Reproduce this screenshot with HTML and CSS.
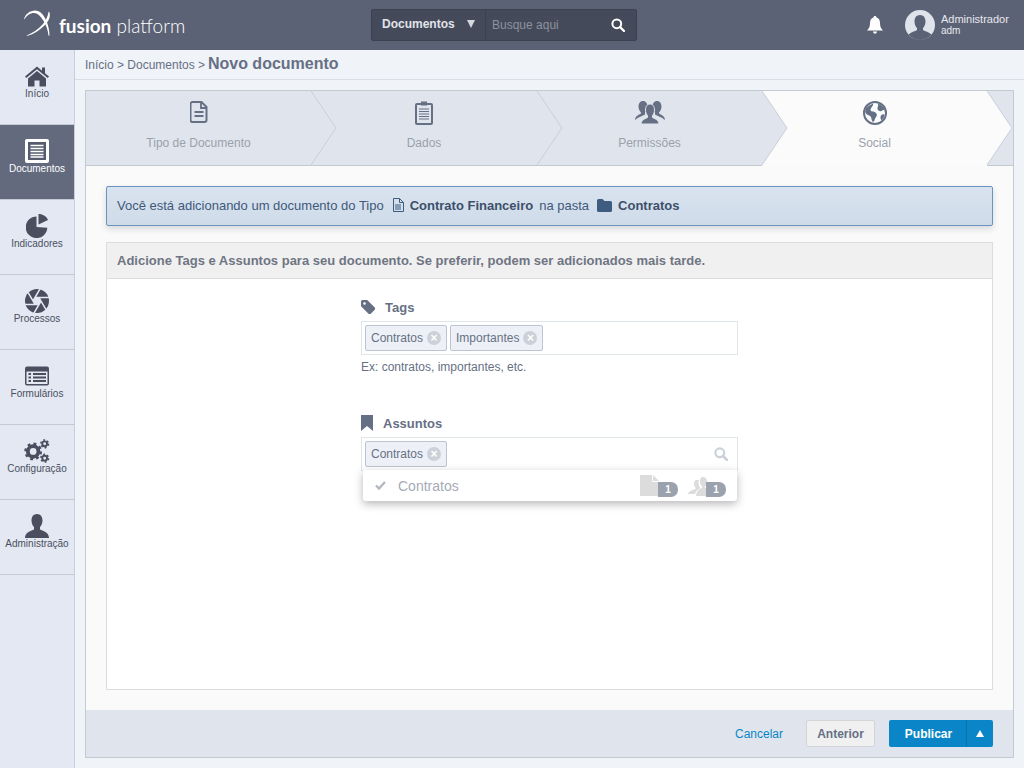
FILE: index.html
```html
<!DOCTYPE html>
<html lang="pt">
<head>
<meta charset="utf-8">
<title>Fusion Platform</title>
<link rel="stylesheet" href="styles.css">
</head>
<body>
<header class="topbar">
  <div class="brand">
    <svg class="logo" width="30" height="30" viewBox="0 0 30 30"><path d="M1 10C2.500 5 7 1.500 12 1.500c5 0 8.500 4 11 9.500 2 4.500 3.500 10 3.500 15.500-.5.2-.7.2-1 0C25 21 23 15.500 20 11 17.500 7.300 14.500 4 11 4 7 4 3.500 6.500 1.500 10.300z" fill="#fff"/><path d="M26 2.500c2 4 .5 9-4 13.500-5 5-11 9-18 11l-.3-.6C10 24 15.500 20 19.500 15.500 23 11.500 25 7 25.500 3z" fill="#fff"/></svg>
    <span class="brand-name"><b>fusion</b> platform</span>
  </div>
  <div class="search">
    <div class="search-type"><span>Documentos</span><i class="caret-down"></i></div>
    <div class="search-field"><span>Busque aqui</span>
      <svg width="14" height="14" viewBox="0 0 14 14"><circle cx="5.800" cy="5.800" r="4.400" fill="none" stroke="#fff" stroke-width="2"/><path d="M9 9l4 4" stroke="#fff" stroke-width="2.400" stroke-linecap="round"/></svg>
    </div>
  </div>
  <div class="user">
    <svg class="bell" width="16" height="18" viewBox="0 0 16 18"><path d="M8 0c1 0 1.500.7 1.500 1.500C12 2.200 13 4.500 13 7c0 4 1 5.500 3 7.500H0C2 12.500 3 11 3 7c0-2.500 1-4.800 3.500-5.500C6.500.7 7 0 8 0zM6 15.500h4c0 1.200-.9 2.200-2 2.200s-2-1-2-2.200z" fill="#fff"/></svg>
    <svg class="avatar" width="30" height="30" viewBox="0 0 30 30"><circle cx="15" cy="15" r="15" fill="#dfe3ea"/><path d="M15 5c3.500 0 5.500 2.800 5.500 6.500 0 3-1.300 5.300-2.500 6.500v2c2 1.300 6 2 8.500 4.500A15 15 0 0 1 15 30 15 15 0 0 1 3.500 24.500C6 22 10 21.300 12 20v-2c-1.200-1.200-2.500-3.500-2.500-6.500C9.500 7.800 11.500 5 15 5z" fill="#5c6276"/></svg>
    <div class="user-text"><span class="user-name">Administrador</span><span class="user-login">adm</span></div>
  </div>
</header>
<div class="shell">
  <nav class="sidebar">
    <a class="nav-item">
      <svg width="24" height="21" viewBox="0 0 24 21"><path d="M12 1L0 11l1.300 1.500L12 3.700l10.700 8.800L24 11l-4-3.300V2h-3v3.200z" fill="#4a4f60"/><path d="M12 5.500L3 13v8h6.500v-6h5v6H21v-8z" fill="#4a4f60"/></svg>
      <span>Início</span>
    </a>
    <a class="nav-item active">
      <svg width="24" height="24" viewBox="0 0 24 24"><rect x="0" y="0" width="24" height="24" rx="2" fill="#fff"/><rect x="3" y="3" width="18" height="18" fill="#565c70"/><path d="M5.500 6.500h13M5.500 9.500h13M5.500 12.500h13M5.500 15.500h13M5.500 18h13" stroke="#fff" stroke-width="1.300"/></svg>
      <span>Documentos</span>
    </a>
    <a class="nav-item">
      <svg width="22" height="24" viewBox="0 0 22 24"><path d="M10.500 2.500a10.800 10.800 0 1 0 10.800 11.200L10.500 13z" fill="#4a4f60"/><path d="M12.500 0v10.500L22 6C20.500 2.500 17 0 12.500 0z" fill="#4a4f60"/></svg>
      <span>Indicadores</span>
    </a>
    <a class="nav-item">
      <svg width="24" height="24" viewBox="0 0 24 24"><circle cx="12" cy="12" r="12" fill="#4a4f60"/><path d="M16 12L9 24.100M14 15.460H0M10 15.460L3 3.300M8 12L15 -.1M10 8.540H24M14 8.540L21 20.660" stroke="#e3e8f2" stroke-width="1.500"/><path d="M16 12l-2 3.460h-4L8 12l2-3.460h4z" fill="#e3e8f2"/></svg>
      <span>Processos</span>
    </a>
    <a class="nav-item">
      <svg width="24" height="19" viewBox="0 0 24 19"><rect width="24" height="19" rx="2" fill="#4a4f60"/><rect x="1.500" y="5" width="21" height="12.500" fill="#e3e8f2"/><path d="M3.500 7.500h2.500M3.500 11h2.500M3.500 14.500h2.500M8 7.500h13M8 11h13M8 14.500h13" stroke="#4a4f60" stroke-width="2"/></svg>
      <span>Formulários</span>
    </a>
    <a class="nav-item">
      <svg width="26" height="25" viewBox="0 0 26 25"><g fill="none" stroke="#4a4f60"><circle cx="9" cy="13" r="5.500" stroke-width="4"/><circle cx="9" cy="13" r="8" stroke-width="2.500" stroke-dasharray="3 3.300"/><circle cx="21" cy="5" r="2.500" stroke-width="2"/><circle cx="21" cy="5" r="4" stroke-width="1.600" stroke-dasharray="2 2.200"/><circle cx="21" cy="20" r="2.500" stroke-width="2"/><circle cx="21" cy="20" r="4" stroke-width="1.600" stroke-dasharray="2 2.200"/></g></svg>
      <span>Configuração</span>
    </a>
    <a class="nav-item">
      <svg width="24" height="24" viewBox="0 0 24 24"><path d="M12 0c3.500 0 5.500 2.800 5.500 6.500 0 3-1.300 5.300-2.500 6.500v2.500c2.500 1.500 9 2.500 9 8.500H0c0-6 6.500-7 9-8.500V13c-1.200-1.200-2.500-3.500-2.500-6.500C6.500 2.800 8.500 0 12 0z" fill="#4a4f60"/></svg>
      <span>Administração</span>
    </a>
  </nav>
  <main class="main">
    <div class="crumbs">Início &gt; Documentos &gt; <strong>Novo documento</strong></div>
    <section class="panel">
      <div class="steps">
        <div class="step step-1">
          <svg width="18" height="22" viewBox="0 0 18 22"><path d="M2.500 1h9l5 5v13a2 2 0 0 1-2 2h-12a2 2 0 0 1-2-2V3a2 2 0 0 1 2-2z" fill="none" stroke="#667085" stroke-width="2"/><path d="M11 1v6h5.500M4.500 11h9M4.500 15h9" fill="none" stroke="#667085" stroke-width="1.800"/></svg>
          <span>Tipo de Documento</span>
          <svg class="chev" width="26" height="74" viewBox="0 0 26 74"><path d="M0 0L25 37 0 74z" fill="#e0e5ed"/><path d="M0 0L25 37 0 74" fill="none" stroke="#c9ced8"/></svg>
        </div>
        <div class="step step-2">
          <svg width="18" height="24" viewBox="0 0 18 24"><rect x="1" y="3" width="16" height="20" rx="1" fill="none" stroke="#667085" stroke-width="2"/><rect x="6" y="0.500" width="6" height="4" fill="#667085"/><path d="M4 8h10M4 10.500h10M4 13h10M4 15.500h10M4 18h10" stroke="#667085"/></svg>
          <span>Dados</span>
          <svg class="chev" width="26" height="74" viewBox="0 0 26 74"><path d="M0 0L25 37 0 74z" fill="#e0e5ed"/><path d="M0 0L25 37 0 74" fill="none" stroke="#c9ced8"/></svg>
        </div>
        <div class="step step-3">
          <svg width="30" height="23" viewBox="0 0 30 23"><path d="M8 0c3 0 4.500 2.500 4.500 5.500S11 10.500 10 11.500v2C8 15 3.500 16 0 19c0-4 5-6 6-6.500v-1C5 10.500 3.500 8.500 3.500 5.500S5 0 8 0zM22 0c3 0 4.500 2.500 4.500 5.500S25 10.500 24 11.500v1c1 .5 6 2.500 6 6.500-3.500-3-8-4-10-5.500v-2C19 10.500 17.500 8.500 17.500 5.500S19 0 22 0z" fill="#667085"/><path d="M15 3c3 0 4.500 2.500 4.500 6 0 2.500-1 4.500-2 5.500v2c2 1.200 6 2 6.500 6.500H6c.500-4.500 4.500-5.300 6.500-6.500v-2c-1-1-2-3-2-5.500 0-3.500 1.500-6 4.500-6z" fill="#667085" stroke="#e0e5ed"/></svg>
          <span>Permissões</span>
          <svg class="chev" width="26" height="74" viewBox="0 0 26 74"><path d="M0 0L25 37 0 74z" fill="#e0e5ed"/><path d="M0 0L25 37 0 74" fill="none" stroke="#c9ced8"/></svg>
        </div>
        <div class="step step-4 current">
          <svg width="24" height="24" viewBox="0 0 24 24"><circle cx="12" cy="12" r="11" fill="#fbfcfd" stroke="#667085" stroke-width="2"/><path d="M3 7.500C5 5 7.500 3.500 10 2.800c.5 1.500-.7 2.500-1.500 3.700C7.500 8 7 9.500 8.500 10.200c2 .5 4.800.8 5.300 3 .5 2-1.500 3-2 5-.3 1.500-.8 3-2 2.500-1.500-1-1-3.500-2-5C6 14 2.500 13.500 2.300 11c-.1-1.300.1-2.500.7-3.500zM14.500 2.500C17.500 3 20 5 21.500 8.500c-1 1-2.500.7-3.500 1.700-1 .5-3.500-.7-3.500-2.700s1.500-3 0-5zM18 14.500c1-1 2.500-1.500 3.500-1-.3 2.500-1.500 4.500-3 6-1-1.500-1.500-3.500-.5-5z" fill="#667085"/></svg>
          <span>Social</span>
          <svg class="chev" width="26" height="74" viewBox="0 0 26 74"><path d="M0 0L25 37 0 74z" fill="#fbfbfc"/><path d="M0 0L25 37 0 74" fill="none" stroke="#c9ced8"/></svg>
        </div>
      </div>
      <div class="body">
        <div class="alert">
          <span class="lead">Você está adicionando um documento do Tipo</span>
          <svg width="12" height="14" viewBox="0 0 12 14"><path d="M1.500.5h6l4 4v9h-10z" fill="none" stroke="#3d5c7f"/><path d="M7.500.5v4h4M3 7h6M3 9h6M3 11h6" fill="none" stroke="#3d5c7f"/></svg>
          <b>Contrato Financeiro</b>
          <span class="gap">na pasta</span>
          <svg width="15" height="13" viewBox="0 0 15 13"><path d="M1.500 0h4l2 2h6A1.500 1.500 0 0 1 15 3.500v8A1.500 1.500 0 0 1 13.500 13h-12A1.500 1.500 0 0 1 0 11.500v-10A1.500 1.500 0 0 1 1.500 0z" fill="#3d5c7f"/></svg>
          <b class="folder-name">Contratos</b>
        </div>
        <div class="card">
          <div class="card-head">Adicione Tags e Assuntos para seu documento. Se preferir, podem ser adicionados mais tarde.</div>
          <div class="card-body">
            <div class="field field-tags">
              <label class="label label-tags">
                <svg width="14" height="14" viewBox="0 0 14 14"><path d="M0 1.500A1.500 1.500 0 0 1 1.500 0h4.700L14 7.800a1.500 1.500 0 0 1 0 1.700L9.500 14a1.500 1.500 0 0 1-1.700 0L0 6.200zM3.500 2.200a1.300 1.300 0 1 0 0 2.600 1.300 1.300 0 0 0 0-2.600z" fill="#667085" fill-rule="evenodd"/></svg>
                Tags
              </label>
              <div class="input">
                <span class="tag">Contratos<i class="x">×</i></span>
                <span class="tag">Importantes<i class="x">×</i></span>
              </div>
              <p class="hint">Ex: contratos, importantes, etc.</p>
            </div>
            <div class="field">
              <label class="label label-subject">
                <svg width="12" height="16" viewBox="0 0 12 16"><path d="M0 0h12v16L6 11l-6 5z" fill="#667085"/></svg>
                Assuntos
              </label>
              <div class="input">
                <span class="tag">Contratos<i class="x">×</i></span>
                <svg class="input-search" width="14" height="14" viewBox="0 0 14 14"><circle cx="5.800" cy="5.800" r="4.400" fill="none" stroke="#ccd0d8" stroke-width="2.200"/><path d="M9 9l4 4" stroke="#ccd0d8" stroke-width="2.600" stroke-linecap="round"/></svg>
              </div>
              <div class="menu">
                <svg class="check" width="11" height="9" viewBox="0 0 11 9"><path d="M1 4.500l3 3 6-6.500" fill="none" stroke="#b3b7c0" stroke-width="2.400"/></svg>
                <span class="menu-text">Contratos</span>
                <span class="count">
                  <svg width="20" height="21" viewBox="0 0 20 21"><path d="M0 0h13l6 6v15H0z" fill="#dcdcdc"/><path d="M12.500 0v6.500H19" fill="none" stroke="#fff"/></svg>
                  <b>1</b>
                </span>
                <span class="count">
                  <svg width="26" height="21" viewBox="0 0 26 21"><path d="M15 2c2.500 0 4 2 4 4.500s-1 4-2 5v1.500c2 1 5 1.500 6 8H8c1-6.500 4-7 6-8v-1.500c-1-1-2-2.500-2-5C12 4 12.500 2 15 2z" fill="#dcdcdc"/><path d="M8 5c-1.500 1-2 2-2 3.500 0 2 .7 3.300 1.500 4v1.500C5.500 15 1 15.500 0 19h7c1-3 3-5 5-5.500v-1c-.5-.7-1.500-2.500-1.500-5 0-1 .3-2 1-2.500z" fill="#dcdcdc"/></svg>
                  <b>1</b>
                </span>
              </div>
            </div>
          </div>
        </div>
      </div>
      <footer class="actions">
        <a class="cancel">Cancelar</a>
        <button class="btn-prev">Anterior</button>
        <div class="btn-group"><button class="btn-main">Publicar</button><button class="btn-more"><i class="caret-up"></i></button></div>
      </footer>
    </section>
  </main>
</div>
</body>
</html>
```

FILE: styles.css
```css
* { box-sizing: border-box; }
html, body { margin: 0; height: 768px; overflow: hidden; }
body { font-family: "Liberation Sans", Arial, sans-serif; font-size: 12px; color: #667085; background: #f0f3f8; }
svg { display: block; flex: none; }

.topbar { height: 50px; background: #5c6276; display: flex; align-items: center; position: relative; }
.brand { display: flex; align-items: center; margin-left: 23px; width: 348px; }
.logo { margin-top: -2px; }
.brand-name { font-family: Lato, sans-serif; font-size: 19px; font-weight: 300; color: #fff; margin-left: 6px; }
.brand-name b { font-weight: 700; }

.search { width: 266px; height: 32px; display: flex; background: #444a59; border: 1px solid #3c4150; border-radius: 2px; margin-top: -1px; }
.search-type { width: 114px; display: flex; align-items: center; padding: 0 0 2px 10px; border-right: 1px solid #3c4150; color: #e1e4ea; font-weight: 700; font-size: 12px; }
.caret-down { width: 0; height: 0; border-left: 4.500px solid transparent; border-right: 4.500px solid transparent; border-top: 8px solid #d5d8de; margin: 1px 0 0 12px; }
.search-field { flex: 1; display: flex; align-items: center; justify-content: space-between; padding: 0 11px 0 6px; color: #8d929f; }
.user { margin-left: auto; display: flex; align-items: center; padding-right: 14px; }
.bell { margin-right: 22px; }
.avatar { margin-right: 6px; }
.user-text { display: flex; flex-direction: column; color: #e6e8ed; font-size: 11px; width: 69px; margin-top: -1px; }
.user-name { line-height: 13px; }
.user-login { font-size: 10px; line-height: 10px; }

.shell { display: flex; height: 718px; }
.sidebar { width: 75px; background: #e3e8f2; border-right: 1px solid #c9ced8; flex: none; }
.nav-item { height: 75px; border-bottom: 1px solid #c5c9d2; display: flex; flex-direction: column; align-items: center; color: #4a4f60; font-size: 10px; padding-top: 14px; position: relative; }
.nav-item svg { height: 24px; }
.nav-item span { position: absolute; top: 38px; white-space: nowrap; }
.nav-item.active { background: #636a7e; color: #fff; }

.main { flex: 1; min-width: 0; }
.crumbs { height: 30px; border-bottom: 1px solid #d9dde4; padding: 5px 0 0 10px; line-height: 18px; color: #667085; }
.crumbs strong { font-size: 16px; margin-left: -.5px; }
.panel { margin: 10px 0 0 10px; width: 929px; height: 668px; border: 1px solid #c5c9d2; background: #fafafa; display: flex; flex-direction: column; }

.steps { height: 75px; display: flex; background: #e0e5ed; border-bottom: 1px solid #c5c9d2; flex: none; }
.step { height: 74px; position: relative; display: flex; flex-direction: column; align-items: center; color: #9aa1ab; padding-top: 10px; }
.step > span { position: absolute; top: 45px; white-space: nowrap; font-size: 12px; }
.chev { position: absolute; left: 100%; top: 0; }
.step-1 { width: 225px; z-index: 4; }
.step-2 { width: 226px; z-index: 3; }
.step-3 { width: 225px; z-index: 2; }
.step-4 { width: 225px; z-index: 1; }
.current { background: #fbfbfc; height: 75px; margin-bottom: -1px; }

.body { flex: 1; padding: 20px; display: flex; flex-direction: column; }
.alert { height: 40px; flex: none; background: linear-gradient(#d9e3ef, #cfdbe9); border: 1px solid #6b93bf; border-radius: 2px; box-shadow: 0 3px 6px rgba(60,70,90,.18); display: flex; align-items: center; padding: 0 0 2px 10px; color: #40597a; font-size: 13px; }
.alert .lead { margin-right: 8px; }
.alert b { font-weight: 700; color: #3d4f6a; margin-left: 6px; }
.alert .gap { margin-left: 6px; margin-right: 8px; }
.alert .folder-name { margin-left: 6px; }
.card { margin-top: 16px; flex: 1; border: 1px solid #dcdcdc; background: #fff; display: flex; flex-direction: column; }
.card-head { height: 36px; line-height: 36px; background: #f0f0f0; border-bottom: 1px solid #dcdcdc; padding-left: 10px; font-weight: 700; font-size: 13px; color: #6f7583; flex: none; }
.card-body { padding: 19px 0 0 254px; }
.field { width: 377px; position: relative; }
.field-tags { height: 116px; }
.label { display: flex; align-items: center; height: 18px; font-weight: 700; font-size: 13px; color: #667085; margin-bottom: 5px; }
.label-tags svg { margin-right: 10px; }
.label-subject svg { margin-right: 10px; }
.input { height: 34px; border: 1px solid #dfe6ea; background: #fff; padding: 3px; display: flex; gap: 3px; align-items: flex-start; position: relative; }
.tag { height: 26px; background: #edf0f6; border: 1px solid #bcc4d4; border-radius: 2px; padding: 0 5px; display: flex; align-items: center; color: #667085; }
.x { width: 14px; height: 14px; border-radius: 50%; background: #ccd0d8; color: #fff; font-style: normal; font-weight: 700; font-size: 12px; line-height: 14px; text-align: center; margin-left: 4px; }
.hint { margin: 4px 0 0; font-size: 12px; line-height: 16px; color: #667085; }
.input-search { position: absolute; right: 9px; top: 9px; }
.menu { height: 31px; margin: -1px 0 0 2px; width: 374px; background: #fff; border-radius: 0 0 3px 3px; box-shadow: 0 3px 8px rgba(50,50,60,.35); display: flex; align-items: center; padding-left: 12px; position: relative; z-index: 2; }
.menu-text { font-size: 14px; color: #a6aab4; margin-left: 12px; flex: 1; }
.count { position: relative; display: block; width: 38px; margin-right: 11px; }
.count + .count { margin-left: -1px; }
.count b { position: absolute; right: 0; top: 6px; margin-top: 1px; width: 20px; height: 15px; background: #9ca1ae; color: #fff; border-radius: 0 7px 7px 0; font-size: 10px; line-height: 15px; text-align: center; }

.actions { height: 47px; flex: none; background: #e0e5ed; display: flex; align-items: center; justify-content: flex-end; padding-right: 20px; }
.cancel { color: #0a85c7; margin-right: 23px; }
.btn-prev { width: 69px; height: 27px; background: #f0f0f0; border: 1px solid #d2d4d8; border-radius: 2px; font: 700 12px "Liberation Sans", sans-serif; color: #667085; margin-right: 14px; padding: 0; }
.btn-group { display: flex; height: 27px; background: #0a85c7; border-radius: 2px; }
.btn-main { width: 78px; background: none; border: 0; border-right: 1px solid #0a72ab; color: #fff; font: 700 12px "Liberation Sans", sans-serif; padding: 0 0 0 2px; }
.btn-more { width: 26px; background: none; border: 0; padding: 0; display: flex; align-items: center; justify-content: center; }
.caret-up { width: 0; height: 0; border-left: 4.500px solid transparent; border-right: 4.500px solid transparent; border-bottom: 7px solid #fff; }
```
